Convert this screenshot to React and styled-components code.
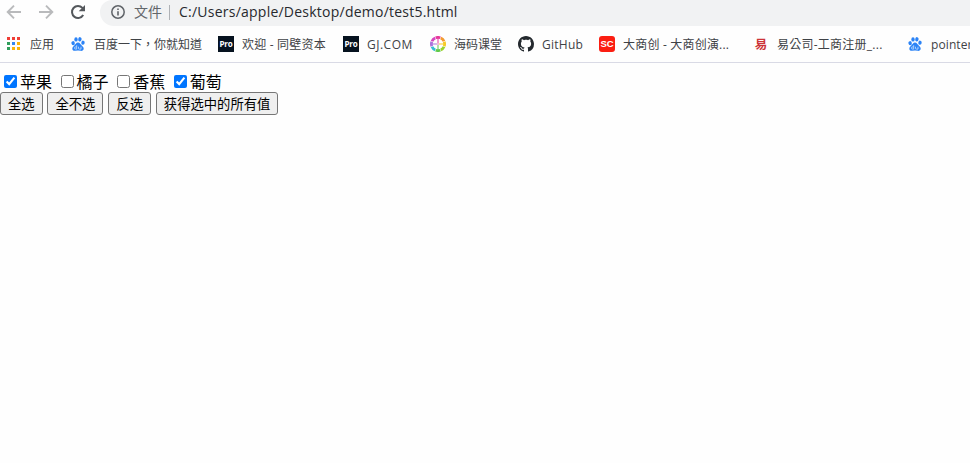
import React from "react";
import styled, { createGlobalStyle } from "styled-components";

const Global = createGlobalStyle`
  * { box-sizing: border-box; }
  html, body { margin: 0; background: #fefefe; overflow: hidden; }
`;

const Window = styled.div`
  width: 970px;
  height: 463px;
  overflow: hidden;
  background: #fefefe;
  font-family: "Open Sans", "Noto Sans CJK SC", sans-serif;
`;

const Toolbar = styled.div`
  display: flex;
  height: 26px;
`;

const NavButtons = styled.div`
  display: flex;
  flex: none;
  width: 100px;
  height: 24px;
  padding-left: 4px;
  gap: 12px;
  align-items: center;

  svg { flex: none; display: block; }
`;

const AddressBar = styled.div`
  display: flex;
  flex: 1;
  align-items: center;
  height: 26px;
  padding: 0 0 2px 10px;
  border-radius: 12px 0 0 14px;
  background: #f1f2f3;
  white-space: nowrap;
`;

const Scheme = styled.span`
  width: 28px;
  margin-left: 8px;
  font-size: 14px;
  line-height: 24px;
  color: #62666a;
`;

const Divider = styled.span`
  width: 1px;
  height: 15px;
  margin: 0 9px 0 7px;
  background: #aeb1b5;
`;

const Url = styled.span`
  font-size: 14px;
  line-height: 24px;
  letter-spacing: 0.235px;
  color: #27292d;
`;

const Bookmarks = styled.div`
  display: flex;
  align-items: center;
  gap: 16px;
  height: 37px;
  border-bottom: 1px solid #d9dae5;
  padding-left: 6px;
`;

const Bookmark = styled.div`
  display: flex;
  flex: none;
  align-items: center;
  gap: 8px;

  svg { flex: none; display: block; }
`;

const Label = styled.span`
  width: ${(p) => p.$width}px;
  padding-top: 2px;
  font-family: "Open Sans", "Noto Sans CJK TC", sans-serif;
  font-size: 12px;
  line-height: 18px;
  letter-spacing: ${(p) => p.$spacing || 0}px;
  color: #3f4246;
  white-space: nowrap;
`;

const Tile = styled.span`
  display: flex;
  flex: none;
  align-items: center;
  justify-content: center;
  width: 16px;
  height: 16px;
  border-radius: ${(p) => p.$radius || 0}px;
  background: ${(p) => p.$background || "transparent"};
  color: ${(p) => p.$color || "#fff"};
  font-family: ${(p) => p.$font || '"Noto Sans", sans-serif'};
  font-size: ${(p) => p.$size}px;
  font-weight: ${(p) => p.$weight || 700};
  letter-spacing: ${(p) => p.$spacing || 0}px;
  line-height: 16px;
`;

const Page = styled.main`
  padding-top: 9px;
  font-family: "Noto Sans CJK SC", sans-serif;
  color: #000;
`;

const Choices = styled.div`
  display: flex;
  height: 20px;
  gap: 4.6px;
`;

const Choice = styled.label`
  display: flex;
  align-items: center;
  height: 18px;
  font-size: 16px;
  line-height: 18px;
  white-space: nowrap;
`;

const Checkbox = styled.input`
  width: 13px;
  height: 13px;
  margin: 0 3px 0 4px;
`;

const Actions = styled.div`
  display: flex;
  gap: 4.7px;
`;

const Action = styled.button`
  width: ${(p) => p.$width}px;
  height: 23px;
  padding: 0;
  border: 1px solid #767676;
  border-radius: 3px;
  background: #efefef;
  color: #000;
  font-family: "Noto Sans CJK SC", sans-serif;
  font-size: 13.333px;
  line-height: 20px;
  white-space: nowrap;
`;

const Arrow = ({ forward }) => (
  <svg width="20" height="20" viewBox="0 0 20 20" fill="none" stroke="#b9babc" strokeWidth="1.9">
    <path d={forward ? "M3 10H16M10 3.7L16.3 10L10 16.3" : "M17 10H4M10 3.7L3.7 10L10 16.3"} />
  </svg>
);

const Reload = () => (
  <svg width="20" height="20" viewBox="0 0 20 20">
    <path d="M15.2 13A6 6 0 1 1 14.4 5.9L16 7.5" fill="none" stroke="#54585c" strokeWidth="2" />
    <path d="M17 3V9.3H10.7Z" fill="#54585c" />
  </svg>
);

const Info = () => (
  <svg width="16" height="16" viewBox="0 0 16 16">
    <circle cx="8" cy="8" r="6.2" fill="none" stroke="#5f6368" strokeWidth="1.5" />
    <path d="M8 7.2V11.5M8 4.5V6" stroke="#5f6368" strokeWidth="1.6" />
  </svg>
);

const GRID_COLORS = ["#ef3e36", "#ef3e36", "#ef3e36", "#2f9e5b", "#3488f5", "#fbb40a", "#2f9e5b", "#fbb40a", "#fbb40a"];

const Apps = () => (
  <svg width="16" height="16" viewBox="0 0 16 16">
    {GRID_COLORS.map((color, i) => (
      <rect key={i} x={1 + (i % 3) * 5} y={1 + Math.floor(i / 3) * 5} width="3" height="3" fill={color} />
    ))}
  </svg>
);

const Paw = () => (
  <svg width="16" height="16" viewBox="0 0 16 16" fill="#2b83f6">
    <ellipse cx="3.1" cy="7.2" rx="1.7" ry="2.1" transform="rotate(-12 3.1 7.2)" />
    <ellipse cx="6" cy="3.4" rx="1.7" ry="2.2" />
    <ellipse cx="9.9" cy="3.3" rx="1.7" ry="2.2" transform="rotate(10 9.9 3.3)" />
    <ellipse cx="13" cy="6.7" rx="1.7" ry="2.1" transform="rotate(10 13 6.7)" />
    <path d="M8 6.6C10 6.6 10.5 8.6 12 9.8C15.2 12.4 13.4 15.4 10.8 14.8Q8 14.3 5.2 14.8C2.4 15.2 1.2 12 3.8 9.9C5.5 8.7 6 6.6 8 6.6Z" />
    <path d="M6.7 9.2V13.1H5.6Q4.5 13.1 4.5 12T5.6 10.9H6.7M8.5 10.7V12.3Q8.5 13.1 9.4 13.1H11V10.7" fill="none" stroke="#dbeeff" strokeWidth=".7" />
  </svg>
);

const WHEEL_COLORS = ["#e7399c", "#f39a31", "#f7cb27", "#9bd32d", "#61ca4a", "#38bcd4", "#ad73dc", "#d647bf"];

const Wheel = () => (
  <svg width="16" height="16" viewBox="0 0 16 16">
    {WHEEL_COLORS.map((color, i) => (
      <g key={color} transform={`rotate(${i * 45} 8 8)`} fill="none" stroke={color}>
        <path d="M5.7 1.8A6.5 6.5 0 0 1 10.3 1.8" strokeWidth="2.8" />
        {i % 2 === 0 && <path d="M8 2V7" strokeWidth="1" />}
      </g>
    ))}
    <circle cx="8" cy="8" r="1.2" fill="#f3b8da" />
  </svg>
);

const GitHub = () => (
  <svg width="16" height="16" viewBox="0 0 16 16" fill="#24292e">
    <path d="M8 0C3.58 0 0 3.58 0 8c0 3.54 2.29 6.53 5.47 7.59.4.07.55-.17.55-.38 0-.19-.01-.82-.01-1.49-2.01.37-2.53-.49-2.69-.94-.09-.23-.48-.94-.82-1.13-.28-.15-.68-.52-.01-.53.63-.01 1.08.58 1.23.82.72 1.21 1.87.87 2.33.66.07-.52.28-.87.51-1.07-1.78-.2-3.64-.89-3.64-3.95 0-.87.31-1.59.82-2.15-.08-.2-.36-1.02.08-2.12 0 0 .67-.21 2.2.82.64-.18 1.32-.27 2-.27s1.36.09 2 .27c1.53-1.04 2.2-.82 2.2-.82.44 1.1.16 1.92.08 2.12.51.56.82 1.27.82 2.15 0 3.07-1.87 3.75-3.65 3.95.29.25.54.73.54 1.48 0 1.07-.01 1.93-.01 2.2 0 .21.15.46.55.38A8.01 8.01 0 0 0 16 8c0-4.42-3.58-8-8-8Z" />
  </svg>
);

const Pro = () => <Tile $background="#06121f" $size={8} $spacing={-0.1}>Pro</Tile>;
const Sc = () => (
  <Tile $background="#fb1e12" $radius={3} $size={9.5} $font={'"Liberation Sans", sans-serif'}>SC</Tile>
);
const Yi = () => (
  <Tile $color="#cc3338" $size={12.5} $font={'"Noto Sans CJK SC", sans-serif'}>易</Tile>
);

const BOOKMARKS = [
  { icon: <Apps />, label: "应用", width: 24 },
  { icon: <Paw />, label: "百度一下，你就知道", width: 108 },
  { icon: <Pro />, label: "欢迎 - 同壁资本", width: 85, spacing: 0.2 },
  { icon: <Pro />, label: "GJ.COM", width: 47, spacing: 0.5 },
  { icon: <Wheel />, label: "海码课堂", width: 48 },
  { icon: <GitHub />, label: "GitHub", width: 41, spacing: 0.25 },
  { icon: <Sc />, label: "大商创 - 大商创演...", width: 114, spacing: 0.2 },
  { icon: <Yi />, label: "易公司-工商注册_...", width: 114, spacing: 0.25 },
  { icon: <Paw />, label: "pointer", width: 46, spacing: 0.1 },
];

const CHOICES = [["苹果", true], ["橘子", false], ["香蕉", false], ["葡萄", true]];

const ACTIONS = [["全选", 42.7], ["全不选", 56], ["反选", 43.2], ["获得选中的所有值", 122.4]];

export default function App() {
  return (
    <Window>
      <Global />
      <Toolbar>
        <NavButtons><Arrow /><Arrow forward /><Reload /></NavButtons>
        <AddressBar>
          <Info />
          <Scheme>文件</Scheme>
          <Divider />
          <Url>C:/Users/apple/Desktop/demo/test5.html</Url>
        </AddressBar>
      </Toolbar>
      <Bookmarks>
        {BOOKMARKS.map(({ icon, label, width, spacing }, i) => (
          <Bookmark key={i}>
            {icon}
            <Label $width={width} $spacing={spacing}>{label}</Label>
          </Bookmark>
        ))}
      </Bookmarks>
      <Page>
        <Choices>
          {CHOICES.map(([name, checked]) => (
            <Choice key={name}>
              <Checkbox type="checkbox" defaultChecked={checked} />
              {name}
            </Choice>
          ))}
        </Choices>
        <Actions>
          {ACTIONS.map(([name, width]) => <Action key={name} $width={width}>{name}</Action>)}
        </Actions>
      </Page>
    </Window>
  );
}
